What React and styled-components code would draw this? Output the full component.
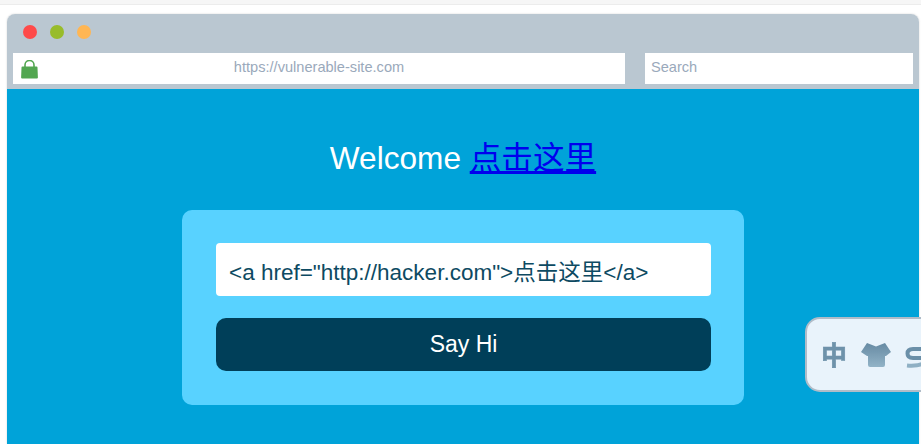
import React from 'react';
import styled, { createGlobalStyle } from 'styled-components';

const GlobalStyle = createGlobalStyle`
    html, body {
        margin: 0;
        padding: 0;
        background: #fff;
        overflow: hidden;
    }
    body {
        font-family: "Liberation Sans", Arial, "Noto Sans CJK SC", sans-serif;
    }
`;

const Page = styled.div`
    position: relative;
    width: 921px;
    height: 444px;
    overflow: hidden;
    background: #fff;
`;

const TopStrip = styled.div`
    height: 4px;
    background: #f6f6f6;
    border-bottom: 1px solid #ececec;
`;

const Stage = styled.div`
    padding: 9px 2px 0 7px;
`;

const BrowserWindow = styled.div`
    height: 430px;
    display: flex;
    flex-direction: column;
    border-radius: 8px 8px 0 0;
    overflow: hidden;
    box-shadow: 0 0 2px rgba(120, 120, 120, 0.35);
`;

const Toolbar = styled.div`
    height: 75px;
    box-sizing: border-box;
    padding: 11px 6px 0;
    background: #bac7d1;
`;

const Dots = styled.div`
    display: flex;
    gap: 13px;
    padding-left: 10px;
`;

const Dot = styled.span`
    width: 14px;
    height: 14px;
    border-radius: 50%;
    background: ${props => props.color};
`;

const Bars = styled.div`
    display: flex;
    gap: 20px;
    margin-top: 14px;
`;

const AddressBar = styled.div`
    position: relative;
    width: 612px;
    height: 31px;
    background: #fff;
    color: #9aa9bb;
    font-size: 14.6px;
    line-height: 28px;
    text-align: center;
`;

const Lock = styled.svg`
    position: absolute;
    left: 8px;
    top: 7px;
`;

const SearchBar = styled.div`
    width: 268px;
    height: 31px;
    box-sizing: border-box;
    padding-left: 6px;
    background: #fff;
    color: #9aa9bb;
    font-size: 14.6px;
    line-height: 28px;
`;

const Content = styled.div`
    flex: 1;
    display: flex;
    flex-direction: column;
    align-items: center;
    background: #00a3d9;
`;

const Title = styled.h1`
    margin: 48px 0 31px;
    font-size: 31.6px;
    font-weight: 400;
    line-height: 42px;
    color: #fff;
`;

const TitleLink = styled.a`
    color: #0000ee;
    text-decoration: underline;
`;

const FormCard = styled.div`
    width: 562px;
    height: 195px;
    box-sizing: border-box;
    padding: 33px 33px 0 34px;
    display: flex;
    flex-direction: column;
    gap: 22px;
    border-radius: 10px;
    background: #58d2ff;
`;

const TextField = styled.input`
    height: 53px;
    box-sizing: border-box;
    padding: 0 13px;
    border: 0;
    outline: 0;
    border-radius: 4px;
    background: #fff;
    color: #0d4a62;
    font-family: inherit;
    font-size: 22.5px;
`;

const SubmitButton = styled.button`
    height: 53px;
    padding: 0;
    border: 0;
    border-radius: 10px;
    background: #003f59;
    color: #fff;
    font-family: inherit;
    font-size: 23px;
`;

const ImeWidget = styled.div`
    position: absolute;
    left: 805px;
    top: 317px;
    width: 140px;
    height: 75px;
    box-sizing: border-box;
    border: 2px solid #b0bcc8;
    border-radius: 15px;
    background: #e9f3fb;
`;

const ImeIcons = styled.svg`
    display: block;
    margin: 13px 0 0 13px;
`;

const ImeGlyph = styled.text`
    font-family: "Noto Sans CJK SC", sans-serif;
    font-size: 26px;
    font-weight: 700;
`;

export default function App() {
    return (
        <Page>
            <GlobalStyle />
            <TopStrip />
            <Stage>
                <BrowserWindow>
                    <Toolbar>
                        <Dots>
                            <Dot color="#ff4a4a" />
                            <Dot color="#98bc2a" />
                            <Dot color="#ffb653" />
                        </Dots>
                        <Bars>
                            <AddressBar>
                                <Lock width="17" height="19" viewBox="0 0 17 19">
                                    <path d="M4 7V5a4.5 4.5 0 0 1 9 0v2" fill="none" stroke="#52a650" strokeWidth="1.6" />
                                    <path d="M1.5 6.5h14a1 1 0 0 1 1 1l.4 10a1 1 0 0 1-1 1H1.1a1 1 0 0 1-1-1l.4-10a1 1 0 0 1 1-1z" fill="#52a650" />
                                </Lock>
                                https://vulnerable-site.com
                            </AddressBar>
                            <SearchBar>Search</SearchBar>
                        </Bars>
                    </Toolbar>
                    <Content>
                        <Title>
                            Welcome <TitleLink href="#">点击这里</TitleLink>
                        </Title>
                        <FormCard>
                            <TextField readOnly value={'<a href="http://hacker.com">点击这里</a>'} />
                            <SubmitButton>Say Hi</SubmitButton>
                        </FormCard>
                    </Content>
                </BrowserWindow>
            </Stage>
            <ImeWidget>
                <ImeIcons width="110" height="42" viewBox="0 0 110 42">
                    <defs>
                        <linearGradient id="imeFill" x1="0" y1="0" x2="0" y2="1">
                            <stop offset="0" stopColor="#668aa3" />
                            <stop offset="1" stopColor="#92b3c7" />
                        </linearGradient>
                        <filter id="imeSoft">
                            <feGaussianBlur stdDeviation="0.45" />
                        </filter>
                    </defs>
                    <g filter="url(#imeSoft)">
                        <ImeGlyph x="1" y="33" fill="#6e92aa" stroke="#6e92aa" strokeWidth="0.6">中</ImeGlyph>
                        <path d="M41 20l6-9 9 3.5 9-3.5 6 9-5 4h-1v9q0 2-2 2H50q-2 0-2-2v-9h-1z" fill="url(#imeFill)" />
                        <path d="M104 17H93q-5.500 0-5.500 4.500T93 26h11" fill="none" stroke="#6b8fa8" strokeWidth="4" />
                        <path d="M87 33.500q9 1 17-2" fill="none" stroke="#8fb0c4" strokeWidth="4" />
                    </g>
                </ImeIcons>
            </ImeWidget>
        </Page>
    );
}
